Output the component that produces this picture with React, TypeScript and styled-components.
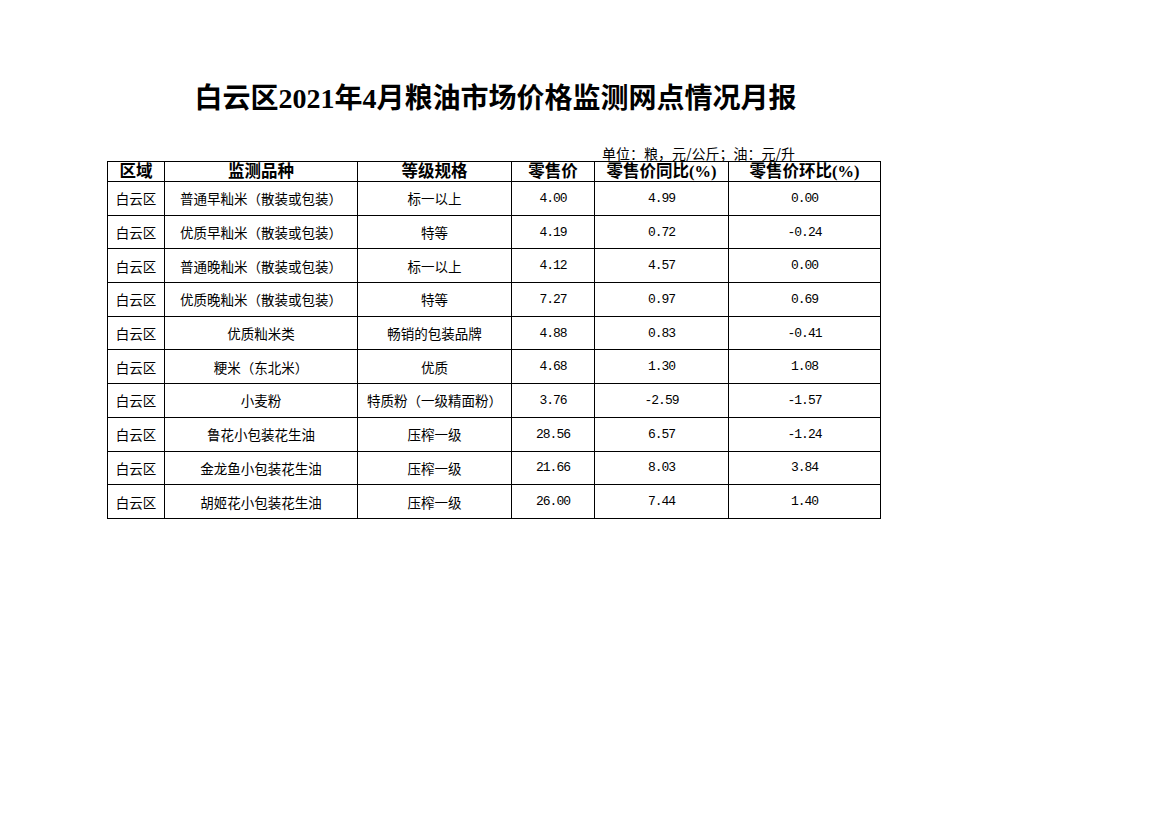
import React from 'react';
import styled, { createGlobalStyle } from 'styled-components';

const GlobalStyle = createGlobalStyle`
	html, body {
		margin: 0;
		padding: 0;
		background: #ffffff;
	}
`;

type Row = {
	area: string;
	variety: string;
	grade: string;
	price: string;
	yoy: string;
	mom: string;
};

const rows: Row[] = [
	{ area: '白云区', variety: '普通早籼米（散装或包装）', grade: '标一以上', price: '4.00', yoy: '4.99', mom: '0.00' },
	{ area: '白云区', variety: '优质早籼米（散装或包装）', grade: '特等', price: '4.19', yoy: '0.72', mom: '-0.24' },
	{ area: '白云区', variety: '普通晚籼米（散装或包装）', grade: '标一以上', price: '4.12', yoy: '4.57', mom: '0.00' },
	{ area: '白云区', variety: '优质晚籼米（散装或包装）', grade: '特等', price: '7.27', yoy: '0.97', mom: '0.69' },
	{ area: '白云区', variety: '优质籼米类', grade: '畅销的包装品牌', price: '4.88', yoy: '0.83', mom: '-0.41' },
	{ area: '白云区', variety: '粳米（东北米）', grade: '优质', price: '4.68', yoy: '1.30', mom: '1.08' },
	{ area: '白云区', variety: '小麦粉', grade: '特质粉（一级精面粉）', price: '3.76', yoy: '-2.59', mom: '-1.57' },
	{ area: '白云区', variety: '鲁花小包装花生油', grade: '压榨一级', price: '28.56', yoy: '6.57', mom: '-1.24' },
	{ area: '白云区', variety: '金龙鱼小包装花生油', grade: '压榨一级', price: '21.66', yoy: '8.03', mom: '3.84' },
	{ area: '白云区', variety: '胡姬花小包装花生油', grade: '压榨一级', price: '26.00', yoy: '7.44', mom: '1.40' },
];

const columns = [57, 193, 154, 83, 134, 152];
const headers = ['区域', '监测品种', '等级规格', '零售价', '零售价同比(%)', '零售价环比(%)'];

const App = () => {
	return (
		<>
			<GlobalStyle />
			<Sheet>
				<Title>白云区2021年4月粮油市场价格监测网点情况月报</Title>
				<UnitLine>
					<Unit>单位：粮，元/公斤；油：元/升</Unit>
				</UnitLine>
				<Table>
					<colgroup>
						{columns.map((w, i) => (
							<col key={i} style={{ width: w }} />
						))}
					</colgroup>
					<thead>
						<HeadRow>
							{headers.map((h) => (
								<HeadCell key={h}>{h}</HeadCell>
							))}
						</HeadRow>
					</thead>
					<tbody>
						{rows.map((r, i) => (
							<BodyRow key={i}>
								<TextCell>{r.area}</TextCell>
								<TextCell>{r.variety}</TextCell>
								<TextCell>{r.grade}</TextCell>
								<NumCell>{r.price}</NumCell>
								<NumCell>{r.yoy}</NumCell>
								<NumCell>{r.mom}</NumCell>
							</BodyRow>
						))}
					</tbody>
				</Table>
			</Sheet>
		</>
	);
};

const Sheet = styled.div`
	width: 773px;
	padding: 85px 0 0 107px;
	color: #000000;
`;

const Title = styled.div`
	padding-left: 4px;
	height: 28px;
	line-height: 28px;
	font-family: "Liberation Serif", "Noto Sans CJK SC", serif;
	font-size: 28px;
	font-weight: bold;
	text-align: center;
	white-space: nowrap;
`;

const UnitLine = styled.div`
	display: flex;
	align-items: flex-end;
	height: 16px;
	margin-top: 32px;
	padding-left: 495px;
`;

const Unit = styled.span`
	font-family: "Noto Sans CJK SC", sans-serif;
	font-size: 14px;
	line-height: 16px;
	white-space: nowrap;
`;

const Table = styled.table`
	width: 773px;
	border-collapse: collapse;
	table-layout: fixed;
`;

const HeadRow = styled.tr`
	height: 20px;
`;

const BodyRow = styled.tr`
	height: 33.7px;
`;

const HeadCell = styled.th`
	border: 1px solid #000000;
	padding: 0;
	height: 19px;
	line-height: 18px;
	font-family: "Liberation Serif", "Noto Sans CJK SC", serif;
	font-size: 16.5px;
	font-weight: bold;
	text-align: center;
	white-space: nowrap;
	overflow: hidden;
`;

const TextCell = styled.td`
	border: 1px solid #000000;
	padding: 0;
	font-family: "Noto Sans CJK SC", sans-serif;
	font-size: 13.5px;
	text-align: center;
	vertical-align: middle;
	white-space: nowrap;
`;

const NumCell = styled(TextCell)`
	font-family: "Liberation Mono", monospace;
	font-size: 13px;
	letter-spacing: -1px;
`;

export default App;
